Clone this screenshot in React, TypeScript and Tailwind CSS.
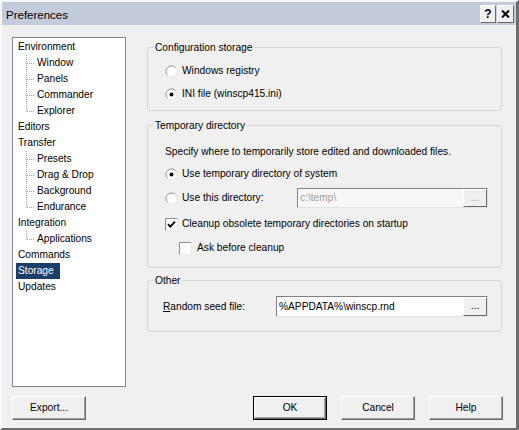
import React from 'react';

type TreeItem = { label: string; child?: boolean; last?: boolean; selected?: boolean };

const tree: TreeItem[] = [
  { label: 'Environment' },
  { label: 'Window', child: true },
  { label: 'Panels', child: true },
  { label: 'Commander', child: true },
  { label: 'Explorer', child: true, last: true },
  { label: 'Editors' },
  { label: 'Transfer' },
  { label: 'Presets', child: true },
  { label: 'Drag & Drop', child: true },
  { label: 'Background', child: true },
  { label: 'Endurance', child: true, last: true },
  { label: 'Integration' },
  { label: 'Applications', child: true, last: true },
  { label: 'Commands' },
  { label: 'Storage', selected: true },
  { label: 'Updates' },
];

function Connector({ last }: { last?: boolean }) {
  return (
    <svg width="19" height="16" viewBox="0 0 19 16" className="shrink-0">
      <line x1="8.5" y1="0" x2="8.5" y2={last ? 8.5 : 16} stroke="#a0a0a0" strokeDasharray="1 1" />
      <line x1="9" y1="8.5" x2="17" y2="8.5" stroke="#a0a0a0" strokeDasharray="1 1" />
    </svg>
  );
}

function RadioIcon({ checked }: { checked?: boolean }) {
  return (
    <svg width="13" height="13" viewBox="0 0 13 13" className="shrink-0">
      <circle cx="6.5" cy="6.5" r="5.5" fill="#fff" />
      <path d="M10.4 2.6 A5.5 5.5 0 0 0 2.6 10.4" fill="none" stroke="#8c8c8c" />
      <path d="M2.6 10.4 A5.5 5.5 0 0 0 10.4 2.6" fill="none" stroke="#e6e6e6" />
      {checked && <circle cx="6.5" cy="6.5" r="2" fill="#000" />}
    </svg>
  );
}

function CheckIcon({ checked }: { checked?: boolean }) {
  return (
    <svg width="13" height="13" viewBox="0 0 13 13" className="shrink-0">
      <rect x="0" y="0" width="13" height="13" fill="#fff" />
      <path d="M0.5 12.5 V0.5 H12.5" fill="none" stroke="#8c8c8c" />
      <path d="M0.5 12.5 H12.5 V0.5" fill="none" stroke="#e6e6e6" />
      {checked && <polyline points="3,6.2 5.3,8.7 10,3.6" fill="none" stroke="#000" strokeWidth="1.8" />}
    </svg>
  );
}

function Radio({ label, checked }: { label: string; checked?: boolean }) {
  return (
    <div className="h-[16px] flex items-center gap-[4px]">
      <RadioIcon checked={checked} />
      <span>{label}</span>
    </div>
  );
}

function Group({ title, className, children }: { title: string; className?: string; children: React.ReactNode }) {
  return (
    <fieldset className={`border border-[#d5d5d5] rounded-[3px] p-0 m-0 ${className ?? ''}`}>
      <legend className="ml-[5px] px-[2px] leading-[13px]">{title}</legend>
      {children}
    </fieldset>
  );
}

function DotsButton({ disabled }: { disabled?: boolean }) {
  return (
    <div
      className={`w-[24px] h-full flex items-center justify-center bg-[#f0f0f0] border border-t-white border-l-white border-r-[#696969] border-b-[#696969] leading-none ${
        disabled ? 'text-[#a0a0a0]' : 'text-black'
      }`}
    >
      ...
    </div>
  );
}

function EditBox({ value, disabled, className }: { value: string; disabled?: boolean; className?: string }) {
  return (
    <div
      className={`flex items-stretch border border-t-[#828282] border-l-[#828282] border-r-[#e3e3e3] border-b-[#e3e3e3] ${
        disabled ? 'bg-[#f7f7f7] text-[#9a9a9a]' : 'bg-white text-black'
      } ${className ?? ''}`}
    >
      <div className="flex-1 flex items-center pl-[2px]">{value}</div>
      <DotsButton disabled={disabled} />
    </div>
  );
}

function DialogButton({ label, isDefault }: { label: string; isDefault?: boolean }) {
  const inner =
    'flex-1 flex items-center justify-center bg-[#f0f0f0] border border-t-white border-l-white border-r-[#696969] border-b-[#696969] shadow-[inset_-1px_-1px_0_#a0a0a0]';
  if (isDefault) {
    return (
      <div className="w-[74px] h-[24px] flex border border-black">
        <div className={inner}>{label}</div>
      </div>
    );
  }
  return (
    <div className="w-[74px] h-[24px] flex">
      <div className={inner}>{label}</div>
    </div>
  );
}

export default function App() {
  return (
    <div className="w-[519px] h-[430px] flex flex-col bg-[#f0f0f0] text-black text-[10.2px] leading-[16px] font-['Liberation_Sans',Arial,sans-serif] border-t-2 border-l-2 border-t-[#f7f7f7] border-l-[#f7f7f7] border-r-[3px] border-b-2 border-r-[#6e6e6e] border-b-[#6e6e6e]">
      {/* Title bar */}
      <div className="h-[23px] shrink-0 flex items-start justify-between bg-[#c4ccdc]">
        <span className="pl-[4px] pt-[6px] text-[11.5px] leading-[14px]">Preferences</span>
        <div className="flex gap-[1px] pt-[3px] pr-[2px]">
          <div className="w-[16px] h-[18px] flex items-center justify-center bg-[#f0f0f0] border border-t-white border-l-white border-r-[#696969] border-b-[#696969] font-bold text-[12px] leading-none">
            ?
          </div>
          <div className="w-[17px] h-[18px] flex items-center justify-center bg-[#f0f0f0] border border-t-white border-l-white border-r-[#696969] border-b-[#696969]">
            <svg width="9" height="8" viewBox="0 0 9 8">
              <path d="M1 0.5 L8 7.5 M8 0.5 L1 7.5" stroke="#000" strokeWidth="2" />
            </svg>
          </div>
        </div>
      </div>

      {/* Body */}
      <div className="flex pl-[10px] pt-[12px]">
        <div className="w-[114px] h-[350px] shrink-0 bg-white border border-[#828790] pl-[5px] pt-[1px]">
          {tree.map((item) => (
            <div key={item.label} className="h-[16px] flex items-center whitespace-nowrap">
              {item.child && <Connector last={item.last} />}
              {item.selected ? (
                <span className="-ml-[2px] pl-[2px] pr-[6px] bg-[#1b3e6b] text-white">{item.label}</span>
              ) : (
                <span>{item.label}</span>
              )}
            </div>
          ))}
        </div>

        <div className="w-[355px] ml-[21px] mt-[4px] flex flex-col">
          <Group title="Configuration storage">
            <div className="pl-[17px] pt-[9px] pb-[8px] flex flex-col gap-[7px]">
              <Radio label="Windows registry" />
              <Radio label="INI file (winscp415.ini)" checked />
            </div>
          </Group>

          <Group title="Temporary directory" className="mt-[8px]">
            <div className="pl-[17px] pr-[13px] pt-[12px] pb-[11px] flex flex-col">
              <div className="h-[16px] flex items-center">
                Specify where to temporarily store edited and downloaded files.
              </div>
              <div className="mt-[6px]">
                <Radio label="Use temporary directory of system" checked />
              </div>
              <div className="mt-[6px] h-[20px] flex items-center">
                <div className="w-[132px] shrink-0">
                  <Radio label="Use this directory:" />
                </div>
                <EditBox value={'c:\\temp\\'} disabled className="flex-1 h-[20px]" />
              </div>
              <div className="mt-[8px] h-[16px] flex items-center gap-[4px]">
                <CheckIcon checked />
                <span>Cleanup obsolete temporary directories on startup</span>
              </div>
              <div className="mt-[8px] ml-[14px] h-[16px] flex items-center gap-[5px]">
                <CheckIcon />
                <span>Ask before cleanup</span>
              </div>
            </div>
          </Group>

          <Group title="Other" className="mt-[6px]">
            <div className="pl-[15px] pr-[13px] pt-[9px] pb-[14px] flex items-center">
              <div className="w-[113px] shrink-0">
                <span className="underline">R</span>andom seed file:
              </div>
              <EditBox value={'%APPDATA%\\winscp.rnd'} className="flex-1 h-[21px]" />
            </div>
          </Group>
        </div>
      </div>

      {/* Buttons */}
      <div className="flex justify-between pl-[10px] pr-[13px] mt-[9px]">
        <DialogButton label="Export..." />
        <div className="flex gap-[14px]">
          <DialogButton label="OK" isDefault />
          <DialogButton label="Cancel" />
          <DialogButton label="Help" />
        </div>
      </div>
    </div>
  );
}
